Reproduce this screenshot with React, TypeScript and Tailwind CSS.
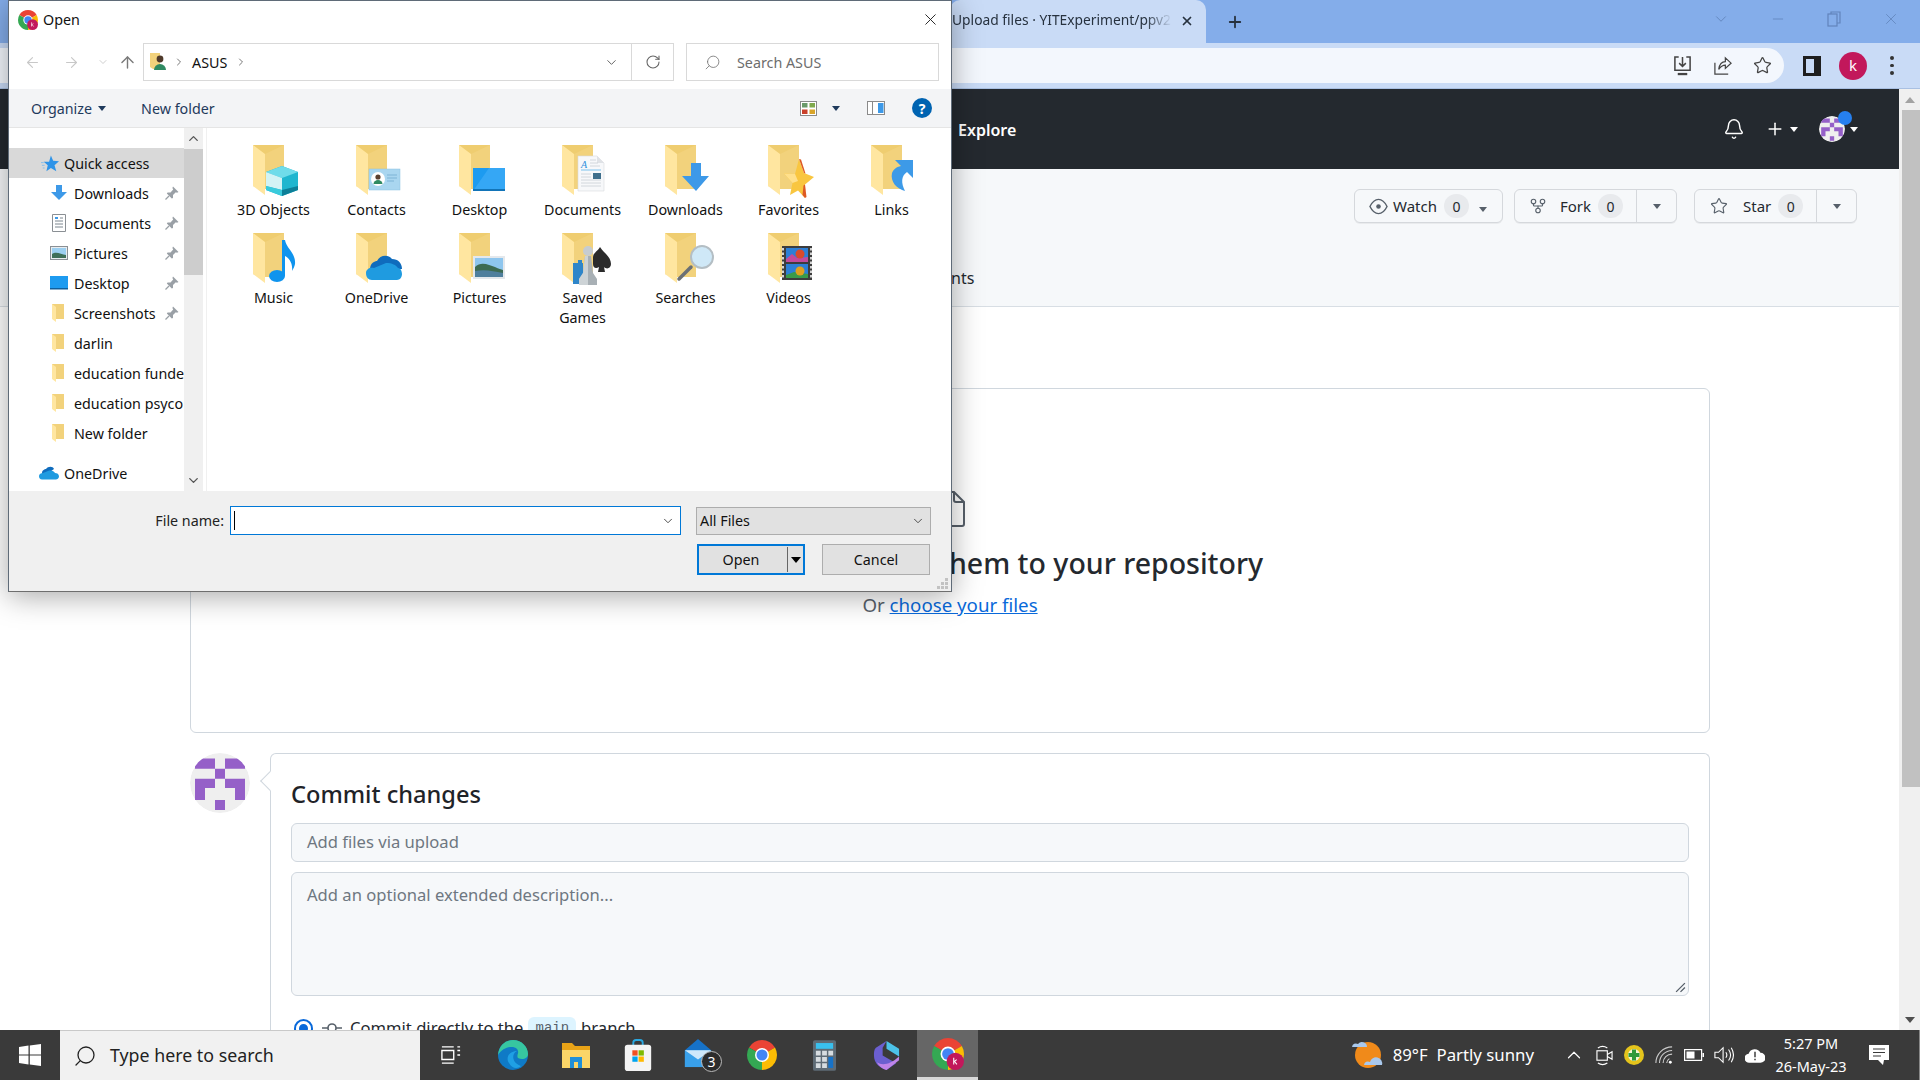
import type { ReactNode } from "react";
import {
  ArrowLeft,
  ArrowRight,
  ArrowUp,
  Bell,
  ChevronDown,
  ChevronRight,
  ChevronUp,
  GitFork,
  Minus,
  Plus,
  RotateCw,
  Search,
  Star,
  X,
} from "lucide-react";

function Caret({ className = "" }: { className?: string }) {
  return <span className={`inline-block w-0 h-0 border-x-[4px] border-x-transparent border-t-[5px] ${className}`} />;
}

function ChromeLogo({ size, badge }: { size: number; badge?: boolean }) {
  return (
    <svg viewBox="0 0 24 24" width={size} height={size} className="shrink-0 overflow-visible">
      <path d="M12 12L1.61 6A12 12 0 0 1 22.39 6Z" fill="#ea4335" />
      <path d="M12 12L22.39 6A12 12 0 0 1 12 24Z" fill="#fbbc04" />
      <path d="M12 12L12 24A12 12 0 0 1 1.61 6Z" fill="#34a853" />
      <circle cx="12" cy="12" r="5.6" fill="#fff" />
      <circle cx="12" cy="12" r="4.4" fill="#4285f4" />
      {badge && <circle cx="17.5" cy="17.5" r="6.5" fill="#c2185b" />}
      {badge && <path d="M16.3 14.8v5M16.3 18l2.2-1.8M16.9 17.6l1.8 2.2" stroke="#fff" strokeWidth="0.8" fill="none" />}
    </svg>
  );
}

function Folder({ children }: { children?: ReactNode }) {
  return (
    <svg viewBox="0 0 42 54" className="w-[42px] h-[54px] overflow-visible">
      <path d="M0 0H31V44H8L0 41Z" fill="#efcd70" />
      <path d="M12 9L31 0V44H12Z" fill="#f2d27c" />
      <path d="M0 0L12 9V50L0 41Z" fill="#ffe6a0" />
      {children}
    </svg>
  );
}

const cube = (
  <g>
    <path d="M29 21L45 27V45L29 51L13 45V27Z" fill="#1fb6cf" />
    <path d="M29 21L45 27L29 33L13 27Z" fill="#6fdcea" />
    <path d="M13 27L29 33V45L13 41Z" fill="#d2f3f5" />
    <path d="M13 41L29 45V51L13 45Z" fill="#39cbdc" />
    <path d="M29 45L45 41V45L29 51Z" fill="#0d7f98" />
  </g>
);

const contactCard = (
  <g>
    <rect x="13" y="24" width="31" height="21" fill="#a9d6f0" stroke="#8cc2e2" strokeWidth="0.5" />
    <circle cx="22" cy="34" r="7" fill="#fff" />
    <circle cx="22" cy="32" r="2.6" fill="#5a4030" />
    <path d="M17.5 39a4.5 4 0 0 1 9 0Z" fill="#2f8a62" />
    <path d="M31 30h10M31 33h10M31 36h7" stroke="#7fb4d6" strokeWidth="1.2" />
  </g>
);

const desktopScreen = (
  <g>
    <rect x="14" y="23" width="32" height="23" fill="#1d9bf0" />
    <path d="M14 46L30 23H46V44H14Z" fill="#35a7f5" />
    <rect x="14" y="44" width="32" height="2" fill="#1274b8" />
  </g>
);

const documentPage = (
  <g>
    <path d="M16 11H35L42 18V46H16Z" fill="#f7f8fa" stroke="#d8dadd" strokeWidth="0.6" />
    <path d="M35 11V18H42Z" fill="#dfe2e6" />
    <path d="M19 25H39" stroke="#5db4ea" strokeWidth="0.8" />
    <path d="M28 15h6M28 18h8M28 21h10M19 29h10M19 32h10M19 35h20M19 38h20M19 41h20" stroke="#c9ced4" strokeWidth="0.8" />
    <text x="19" y="23" fontSize="10" fontStyle="italic" fontFamily="Liberation Serif" fill="#2f8fdc">A</text>
    <rect x="31" y="28" width="8" height="6" fill="#3f6f8c" />
  </g>
);

const downloadArrow = <path d="M26 18H36V31H44L31 46L17 31H26Z" fill="#3d99e8" />;

const favoriteStar = (
  <g>
    <path d="M31 14L36 28L46 32L37 39.5L37 53L30 45.5L22 50L24.5 38L16 28.5L27 29Z" fill="#f9c640" />
    <path d="M16 28.5L27 29L30 36L24.5 38Z" fill="#ffe08c" />
    <path d="M31 14L33 14.5L37.5 28.5L36 28Z" fill="#dd5a24" />
    <path d="M35.5 40.5L37 39.5L38.5 52L37 53L34.5 50Z" fill="#dd5a24" />
  </g>
);

const linkArrow = (
  <path d="M24 15H42V33L36 27C30 31 30 38 34 46C26 44 19 37 21 28C22 25 25 22 30 21Z" fill="#3d9ae8" />
);

const musicNote = (
  <g>
    <ellipse cx="24" cy="43" rx="8" ry="6" fill="#0f94ee" />
    <path d="M29 43V7H32C33 15 43 20 42 31C41.5 34 40 36 39 38C40 30 36 25 32 23V43Z" fill="#0f94ee" />
  </g>
);

const oneDriveCloud = (
  <g>
    <path d="M14 36C14 30 19 28 21 28C24 22 32 21 36 26C42 26 46 30 46 36H30L18 44C15 43 14 40 14 36Z" fill="#0f6cbd" />
    <path d="M10 40C10 36 14 34 18 35L30 30C36 30 40 32 42 35C45 35 46 39 46 41C46 44 44 47 41 47H16C12 47 10 44 10 40Z" fill="#1f9be0" />
  </g>
);

const landscape = (
  <g>
    <rect x="14" y="23" width="32" height="23" fill="#e4e8ec" />
    <rect x="16" y="25" width="28" height="19" fill="#8ec6ee" />
    <path d="M16 34C22 28 30 32 36 34C40 36 42 36 44 37V44H16Z" fill="#3d6b52" />
    <path d="M16 38C26 36 34 38 44 40V44H16Z" fill="#4f7f9d" />
  </g>
);

const gamesIcons = (
  <g>
    <path d="M11 30H16V27H20V30H21V51H11Z" fill="#2f86c9" />
    <path d="M38 14C42 20 49 24 49 31C49 35 45 37 42 34L43 39H36L37 34C34 36 31 35 31 31V24C31 20 36 18 38 14Z" fill="#2b2b2b" />
    <circle cx="26" cy="18" r="5" fill="#c6ccd0" />
    <path d="M23 23H29L31 40L35 46V52H17V46L21 40Z" fill="#a8b0b5" />
    <path d="M23 23H26V52H17V46L21 40Z" fill="#cdd3d6" />
  </g>
);

const magnifier = (
  <g>
    <path d="M14 46L26 34" stroke="#6b7075" strokeWidth="3.5" strokeLinecap="round" />
    <circle cx="37" cy="24" r="11" fill="#cfe8f7" stroke="#b4bec4" strokeWidth="2" />
  </g>
);

const filmStrip = (
  <g>
    <rect x="14" y="13" width="30" height="34" fill="#3d3d3d" />
    <path d="M15 15v30M43 15v30" stroke="#d4d4d4" strokeWidth="2" strokeDasharray="2.5 2" />
    <rect x="18" y="15" width="22" height="14" fill="#2d7fd6" />
    <rect x="18" y="31" width="22" height="14" fill="#2d7fd6" />
    <path d="M18 26l6-5 5 4 11-1v5H18Z" fill="#c24a9c" />
    <path d="M18 42l8-3 14 2v4H18Z" fill="#3a9a4a" />
    <circle cx="32" cy="21" r="4.5" fill="#d94a2a" />
    <circle cx="32" cy="38" r="4.5" fill="#e0a020" />
  </g>
);

const FILES: { label: string; art: ReactNode }[] = [
  { label: "3D Objects", art: cube },
  { label: "Contacts", art: contactCard },
  { label: "Desktop", art: desktopScreen },
  { label: "Documents", art: documentPage },
  { label: "Downloads", art: downloadArrow },
  { label: "Favorites", art: favoriteStar },
  { label: "Links", art: linkArrow },
  { label: "Music", art: musicNote },
  { label: "OneDrive", art: oneDriveCloud },
  { label: "Pictures", art: landscape },
  { label: "Saved Games", art: gamesIcons },
  { label: "Searches", art: magnifier },
  { label: "Videos", art: filmStrip },
];

function SmallIcon({ kind }: { kind: string }) {
  if (kind === "download")
    return (
      <svg viewBox="0 0 18 18" className="w-[18px] h-[18px]">
        <path d="M6 1H12V8H17L9 16L1 8H6Z" fill="#3d99e8" />
      </svg>
    );
  if (kind === "document")
    return (
      <svg viewBox="0 0 18 18" className="w-[18px] h-[18px]">
        <path d="M2.5 0.5H15.5V17.5H2.5Z" fill="#fff" stroke="#8a8f94" />
        <path d="M5 4h3M10 4h3M5 7h8M5 10h8M5 13h8" stroke="#7d8790" />
        <path d="M5 3h3v2H5Z" fill="#3d99e8" />
      </svg>
    );
  if (kind === "picture")
    return (
      <svg viewBox="0 0 18 14" className="w-[18px] h-[14px]">
        <rect x="0.5" y="0.5" width="17" height="13" fill="#e8ecef" stroke="#8a8f94" />
        <rect x="2" y="2" width="14" height="10" fill="#9ccff0" />
        <path d="M2 8C6 5 11 8 16 9V12H2Z" fill="#3e6f58" />
      </svg>
    );
  if (kind === "desktop")
    return (
      <svg viewBox="0 0 18 14" className="w-[18px] h-[14px]">
        <rect width="18" height="13" fill="#1d9bf0" />
        <rect y="12" width="18" height="1.5" fill="#0f5f9c" />
      </svg>
    );
  return (
    <svg viewBox="0 0 13 18" className="w-[13px] h-[18px] ml-[2px]">
      <path d="M0 0H12V15H3L0 14Z" fill="#f2d27c" />
      <path d="M0 0L4 3V18L0 15Z" fill="#ffe6a0" />
    </svg>
  );
}

function PinIcon() {
  return (
    <svg viewBox="0 0 14 14" className="w-[14px] h-[14px] ml-auto mr-[5px] shrink-0">
      <path d="M8 0.5L13.5 6L12 6.8L10.8 6.2L8 9L8 12L6.8 12.6L1.8 7.6L2.6 6.5L5.5 6.5L8.2 3.5L7.4 2Z" fill="#9aa0a6" />
      <path d="M4 10L0.5 13.5" stroke="#9aa0a6" strokeWidth="1.2" />
    </svg>
  );
}

const NAV_ITEMS = [
  { label: "Downloads", icon: "download", pin: true },
  { label: "Documents", icon: "document", pin: true },
  { label: "Pictures", icon: "picture", pin: true },
  { label: "Desktop", icon: "desktop", pin: true },
  { label: "Screenshots", icon: "folder", pin: true },
  { label: "darlin", icon: "folder" },
  { label: "education funde", icon: "folder" },
  { label: "education psyco", icon: "folder" },
  { label: "New folder", icon: "folder" },
];

function CloudSmall() {
  return (
    <svg viewBox="0 0 20 14" className="w-[20px] h-[14px]">
      <path d="M3 7C3 4 6 3 7 3C9 0 14 0 15 3L8 8L3 10Z" fill="#0f6cbd" />
      <path d="M0 10C0 8 2 7 4 7L9 5C12 4 15 5 16 7C18 7 20 8 20 10.5C20 12.5 18 13.5 17 13.5H3C1 13.5 0 12 0 10Z" fill="#1f9be0" />
    </svg>
  );
}

function FileDialog() {
  return (
    <div className="absolute left-[8px] top-0 w-[944px] h-[592px] flex flex-col bg-white border border-[#5f6b78] border-b-[#6e6e6e] shadow-[0_4px_28px_rgba(0,0,0,0.35)] text-[14.3px] text-[#111]">
      <div className="h-[39px] flex items-center justify-between pl-[9px] pr-[12px] pb-[2px] shrink-0">
        <div className="flex items-center gap-[5px]">
          <ChromeLogo size={20} badge />
          <span>Open</span>
        </div>
        <X className="w-[19px] h-[19px] -mr-px text-[#222]" strokeWidth={1.2} />
      </div>

      <div className="h-[49px] pt-[3px] flex items-start shrink-0">
        <div className="w-[134px] h-[38px] flex items-center relative text-[#c8c8c8]">
          <ArrowLeft className="w-[17px] h-[17px] ml-[15px]" strokeWidth={1.6} />
          <ArrowRight className="w-[17px] h-[17px] ml-[22px]" strokeWidth={1.6} />
          <ChevronDown className="w-[12px] h-[12px] ml-[17px]" strokeWidth={1.8} />
          <ArrowUp className="w-[19px] h-[19px] ml-[9px] text-[#7a7a7a]" strokeWidth={1.8} />
        </div>
        <div className="w-[531px] h-[38px] border border-[#d9d9d9] flex items-center">
          <svg viewBox="0 0 16 18" className="w-[16px] h-[18px] ml-[6px] shrink-0">
            <path d="M0 0H10V16H3L0 14Z" fill="#f2d27c" />
            <circle cx="10" cy="6" r="3.4" fill="#4f3a2b" />
            <path d="M4 17a6 6 0 0 1 12 0Z" fill="#2f8a62" />
          </svg>
          <ChevronRight className="w-[12px] h-[12px] ml-[7px] text-[#777]" strokeWidth={2} />
          <span className="ml-[7px] mt-[2px]">ASUS</span>
          <ChevronRight className="w-[12px] h-[12px] ml-[8px] text-[#777]" strokeWidth={2} />
          <ChevronDown className="w-[15px] h-[15px] ml-auto mr-[12px] text-[#666]" strokeWidth={1.6} />
          <div className="w-[42px] h-full border-l border-[#d9d9d9] flex items-center justify-center">
            <RotateCw className="w-[16px] h-[16px] text-[#666]" strokeWidth={1.6} />
          </div>
        </div>
        <div className="w-[253px] h-[38px] ml-[12px] border border-[#d9d9d9] flex items-center text-[#6d6d6d]">
          <Search className="w-[17px] h-[17px] ml-[17px] -scale-x-100 text-[#777]" strokeWidth={1.2} />
          <span className="ml-[16px] mt-[2px]">Search ASUS</span>
        </div>
      </div>

      <div className="h-[39px] flex items-center bg-[#f3f4f6] border-b border-[#e5e5e5] pl-[22px] pr-[19px] shrink-0 text-[#1f3a5c]">
        <span className="mt-px">Organize</span>
        <Caret className="ml-[6px] border-t-[#1f3a5c]" />
        <span className="ml-[35px] mt-px">New folder</span>
        <svg viewBox="0 0 17 15" className="w-[17px] h-[15px] ml-auto">
          <rect x="0.5" y="0.5" width="16" height="14" fill="#fff" stroke="#8a8a8a" />
          <rect x="2" y="2" width="5.5" height="4.5" fill="#6a9a6a" />
          <rect x="9.5" y="2" width="5.5" height="4.5" fill="#7fa94c" />
          <rect x="2" y="8.5" width="5.5" height="4.5" fill="#c9402a" />
          <rect x="9.5" y="8.5" width="5.5" height="4.5" fill="#d9a52a" />
        </svg>
        <Caret className="ml-[15px] border-t-[#1f3a5c]" />
        <svg viewBox="0 0 18 14" className="w-[18px] h-[14px] ml-[27px]">
          <rect x="0.5" y="0.5" width="17" height="13" fill="#fff" stroke="#8a8a8a" />
          <rect x="11" y="2" width="5.5" height="10" fill="#3d99e8" />
          <path d="M5.5 1v12" stroke="#8a8a8a" />
        </svg>
        <div className="w-[20px] h-[20px] ml-[27px] rounded-full bg-[#0063b1] text-white text-[14px] font-bold flex items-center justify-center">?</div>
      </div>

      <div className="h-[363px] flex shrink-0">
        <div className="w-[175px] pt-[20px] overflow-hidden shrink-0">
          <div className="h-[30px] bg-[#d9d9d9] flex items-center">
            <svg viewBox="0 0 20 18" className="w-[18px] h-[17px] ml-[32px] mr-[5px] shrink-0">
              <path d="M11 0L13.5 6L20 6.5L15 11L17 17.5L11 14L6 17.5L7.5 11L3 7H9Z" fill="#2f94e8" />
              <path d="M0 8h3M1 11h3M2 14h2" stroke="#7fbcee" />
            </svg>
            <span className="mt-px">Quick access</span>
          </div>
          {NAV_ITEMS.map((item) => (
            <div key={item.label} className="h-[30px] flex items-center whitespace-nowrap">
              <div className="w-[18px] ml-[41px] mr-[6px] shrink-0 flex items-center">
                <SmallIcon kind={item.icon} />
              </div>
              <span className="mt-[2px]">{item.label}</span>
              {item.pin && <PinIcon />}
            </div>
          ))}
          <div className="h-[30px] mt-[10px] flex items-center">
            <div className="ml-[30px] mr-[5px]">
              <CloudSmall />
            </div>
            <span className="mt-[2px]">OneDrive</span>
          </div>
        </div>
        <div className="w-[19px] shrink-0 bg-[#f0f0f0] flex flex-col items-center">
          <div className="h-[21px] flex items-center">
            <ChevronUp className="w-[15px] h-[15px] text-[#555]" strokeWidth={2.2} />
          </div>
          <div className="w-full h-[126px] bg-[#cdcdcd]" />
          <div className="mt-auto h-[21px] flex items-center">
            <ChevronDown className="w-[15px] h-[15px] text-[#555]" strokeWidth={2.2} />
          </div>
        </div>
        <div className="flex-1 ml-[3px] border-l border-[#f0f0f0] pl-[15px] pt-[17px]">
          <div className="grid grid-cols-[repeat(7,103px)] auto-rows-[88px]">
            {FILES.map((file) => (
              <div key={file.label} className="flex flex-col items-center">
                <Folder>{file.art}</Folder>
                <div className="w-[80px] mt-px text-center leading-[20px]">{file.label}</div>
              </div>
            ))}
          </div>
        </div>
      </div>

      <div className="flex-1 bg-[#f0f0f0] pt-[15px] pr-[20px] relative flex flex-col items-end">
        <div className="flex items-center">
          <span className="mr-[6px] text-[#222]">File name:</span>
          <div className="w-[451px] h-[29px] bg-white border border-[#0078d7] flex items-center justify-between pl-[3px] pr-[5px]">
            <div className="w-px h-[19px] bg-black" />
            <ChevronDown className="w-[14px] h-[14px] text-[#444]" strokeWidth={1.6} />
          </div>
          <div className="w-[235px] h-[28px] ml-[15px] bg-[#e1e1e1] border border-[#adadad] flex items-center justify-between pl-[3px] pr-[5px]">
            <span>All Files</span>
            <ChevronDown className="w-[14px] h-[14px] text-[#444]" strokeWidth={1.6} />
          </div>
        </div>
        <div className="flex mt-[9px] mr-px">
          <div className="w-[108px] h-[31px] bg-[#e1e1e1] border-2 border-[#0078d7] flex items-center">
            <span className="w-[84px] mr-[4px] text-center">Open</span>
            <div className="w-px h-[25px] bg-[#666]" />
            <Caret className="ml-[3px] border-x-[5px] border-t-[6px] border-t-black" />
          </div>
          <div className="w-[108px] h-[31px] ml-[17px] bg-[#e1e1e1] border border-[#adadad] flex items-center justify-center">
            Cancel
          </div>
        </div>
        <svg viewBox="0 0 12 12" className="absolute right-[3px] bottom-[1px] w-[12px] h-[12px]">
          <path d="M9 0h3v3H9ZM5 4h3v3H5ZM9 4h3v3H9ZM1 8h3v3H1ZM5 8h3v3H5ZM9 8h3v3H9Z" fill="#c2c2c2" />
        </svg>
      </div>
    </div>
  );
}

function RepoButton({
  icon,
  label,
  count,
  split,
  labelClass,
}: {
  icon: ReactNode;
  label: string;
  count: number;
  split?: boolean;
  labelClass: string;
}) {
  return (
    <div className={`h-[34px] flex items-center bg-[#f6f8fa] border border-[#d5d8dc] rounded-[6px] shadow-[0_1px_0_rgba(27,31,36,0.06)] ${split ? "w-[163px]" : "w-[149px]"}`}>
      <div className={`flex items-center h-full pl-[14px] ${split ? "w-[122px] border-r border-[#d5d8dc]" : ""}`}>
        {icon}
        <span className={`text-[15px] text-[#24292f] ${labelClass}`}>{label}</span>
        <span className="ml-[7px] w-[25px] h-[24px] rounded-full bg-[#e8eaed] flex items-center justify-center text-[14px] text-[#24292f]">{count}</span>
      </div>
      <div className={split ? "flex-1 flex justify-center" : "ml-[10px]"}>
        <Caret className="border-t-[#57606a]" />
      </div>
    </div>
  );
}

function Identicon({ size }: { size: number }) {
  return (
    <svg viewBox="0 0 60 60" width={size} height={size} className="shrink-0 rounded-full">
      <circle cx="30" cy="30" r="30" fill="#efefef" />
      <path d="M5 5H25V16H5ZM35 5H55V16H35ZM25 16H35V27H25ZM5 27H25V37H15V50H5ZM35 27H55V50H45V37H35ZM25 50H35V61H25Z" fill="#9560c8" transform="translate(0 1) scale(1 0.92)" />
    </svg>
  );
}

function GithubPage() {
  return (
    <div className="flex-1 flex flex-col overflow-hidden [font-family:'Noto_Sans',sans-serif]">
      <div className="h-[80px] shrink-0 bg-[#24292f] flex items-center text-white pl-[958px] pr-[41px]">
        <span className="text-[16px] font-semibold mt-[2px]">Explore</span>
        <Bell className="w-[22px] h-[22px] ml-auto" strokeWidth={1.6} />
        <Plus className="w-[20px] h-[20px] ml-[20px]" strokeWidth={1.8} />
        <Caret className="ml-[5px] border-t-white" />
        <div className="ml-[21px] relative flex items-center">
          <Identicon size={26} />
          <span className="absolute -top-[5px] right-[-7px] w-[14px] h-[14px] rounded-full bg-[#2680f0]" />
        </div>
        <Caret className="ml-[5px] border-t-white" />
      </div>

      <div className="h-[138px] shrink-0 bg-[#f6f8fa] border-b border-[#d8dee4] pt-[20px] pr-[42px] flex flex-col">
        <div className="flex justify-end">
          <RepoButton
            label="Watch"
            count={0}
            labelClass="ml-[5px]"
            icon={
              <svg viewBox="0 0 20 20" className="w-[19px] h-[19px] shrink-0">
                <path d="M1 10C4 4 7 2.5 10 2.5S16 4 19 10C16 16 13 17.5 10 17.5S4 16 1 10Z" fill="none" stroke="#57606a" strokeWidth="1.5" />
                <circle cx="10" cy="10" r="2.4" fill="#57606a" />
              </svg>
            }
          />
          <div className="ml-[11px]">
            <RepoButton label="Fork" count={0} split labelClass="ml-[13px]" icon={<GitFork className="w-[18px] h-[18px] text-[#57606a]" strokeWidth={1.5} />} />
          </div>
          <div className="ml-[17px]">
            <RepoButton label="Star" count={0} split labelClass="ml-[15px]" icon={<Star className="w-[18px] h-[18px] ml-px text-[#57606a]" strokeWidth={1.5} />} />
          </div>
        </div>
        <span className="mt-[43px] ml-[951px] text-[16px] leading-[24px] text-[#24292f] whitespace-nowrap">nts</span>
      </div>

      <div className="flex-1 bg-white pl-[190px] pt-[81px]">
        <div className="w-[1520px] h-[345px] border border-[#d0d7de] rounded-[6px] flex flex-col items-center pt-[102px]">
          <svg viewBox="0 0 32 36" className="w-[32px] h-[36px]">
            <path d="M3 1H20L30 11V33A2 2 0 0 1 28 35H4A2 2 0 0 1 2 33V3A2 2 0 0 1 4 1Z" fill="none" stroke="#57606a" strokeWidth="2" />
            <path d="M20 1V9A2 2 0 0 0 22 11H30" fill="none" stroke="#57606a" strokeWidth="2" />
          </svg>
          <h2 className="mt-[16px] text-[28.5px] leading-[40px] font-medium text-[#24292f] whitespace-nowrap">Drag files here to add them to your repository</h2>
          <p className="mt-[7px] text-[18.7px] leading-[30px] text-[#57606a]">
            Or <span className="text-[#0969da] underline">choose your files</span>
          </p>
        </div>
        <div className="flex mt-[20px]">
          <Identicon size={60} />
          <div className="ml-[20px] w-[1440px] relative border border-[#d0d7de] border-b-0 rounded-t-[6px] h-[400px] px-[20px] pt-[23px]">
            <div className="absolute -left-[8px] top-[20px] w-[14px] h-[14px] rotate-45 bg-white border-l border-b border-[#d0d7de]" />
            <h3 className="text-[23.6px] leading-[34px] font-medium text-[#1f2328]">Commit changes</h3>
            <div className="mt-[12px] h-[39px] bg-[#f6f8fa] border border-[#d0d7de] rounded-[6px] flex items-center pl-[15px] text-[16.6px] text-[#6e7781]">Add files via upload</div>
            <div className="mt-[10px] h-[124px] bg-[#f6f8fa] border border-[#d0d7de] rounded-[6px] pl-[15px] pt-[10px] text-[16.6px] text-[#6e7781] relative">
              Add an optional extended description...
              <svg viewBox="0 0 10 10" className="absolute right-[2px] bottom-[2px] w-[11px] h-[11px]">
                <path d="M1 9L9 1M5 9L9 5" stroke="#57606a" strokeWidth="1.2" />
              </svg>
            </div>
            <div className="mt-[21px] flex items-center pl-[5px] text-[16.6px] text-[#24292f] h-[22px] leading-[22px]">
              <span className="w-[15px] h-[15px] rounded-full border-[3px] border-white bg-[#0969da] outline-2 outline-[#0969da]" />
              <svg viewBox="0 0 20 12" className="w-[20px] h-[12px] ml-[11px]">
                <circle cx="10" cy="6" r="4" fill="none" stroke="#57606a" strokeWidth="1.6" />
                <path d="M0 6H6M14 6H20" stroke="#57606a" strokeWidth="1.6" />
              </svg>
              <span className="ml-[8px]">Commit directly to the</span>
              <code className="mx-[5px] px-[7px] rounded-[6px] bg-[#ddf4ff] text-[14px] text-[#57606a] [font-family:'Liberation_Mono',monospace]">main</code>
              <span>branch</span>
            </div>
          </div>
        </div>
      </div>
    </div>
  );
}

function PageScrollbar() {
  return (
    <div className="w-[21px] shrink-0 bg-[#f0f0f0] flex flex-col items-center">
      <div className="h-[21px] flex items-center">
        <span className="w-0 h-0 border-x-[5px] border-x-transparent border-b-[6px] border-b-[#a3a3a3]" />
      </div>
      <div className="w-[18px] h-[677px] ml-[3px] bg-[#c1c1c1]" />
      <div className="mt-auto h-[21px] flex items-center">
        <Caret className="border-x-[5px] border-t-[6px] border-t-[#505050]" />
      </div>
    </div>
  );
}

function Taskbar() {
  return (
    <div className="h-[50px] shrink-0 bg-[#3a3a3a] flex items-stretch text-white [font-family:'Noto_Sans',sans-serif]">
      <div className="w-[60px] flex items-center justify-center">
        <svg viewBox="0 0 22 22" className="w-[22px] h-[22px]">
          <path d="M0 3L9.5 1.6V10.4H0ZM10.8 1.4L22 0V10.4H10.8ZM0 11.6H9.5V20.4L0 19ZM10.8 11.6H22V22L10.8 20.6Z" fill="#fff" />
        </svg>
      </div>
      <div className="w-[360px] bg-[#f1f1f1] border-t border-[#c9c9c9] flex items-center text-[#222]">
        <Search className="w-[24px] h-[24px] ml-[13px] -scale-x-100" strokeWidth={1.3} />
        <span className="ml-[13px] text-[17.8px]">Type here to search</span>
      </div>
      <div className="w-[61px] flex items-center justify-center">
        <svg viewBox="0 0 22 22" className="w-[20px] h-[20px]" fill="none" stroke="#fff" strokeWidth="1.5">
          <path d="M1 2H14M1 20H14M1 6H14V16H1Z" />
          <path d="M18 2h3M18 6h3M18 11h3" />
        </svg>
      </div>
      <div className="w-[64px] flex items-center justify-center">
        <svg viewBox="0 0 32 32" className="w-[32px] h-[32px]">
          <circle cx="16" cy="16" r="15" fill="#0f7ac6" />
          <path d="M1 16C2 6 9 1 16 1C25 1 31 8 31 15C31 20 25 21 21 19C19 16 23 14 20 10C16 6 6 8 1 16Z" fill="#37c6a0" />
          <path d="M12 24C8 18 13 12 20 12C14 15 15 24 24 27C21 30 15 30 12 24Z" fill="#1fa0e4" />
        </svg>
      </div>
      <div className="w-[62px] flex items-center justify-center">
        <svg viewBox="0 0 28 28" className="w-[28px] h-[28px]">
          <path d="M0 2H10L13 5H28V27H0Z" fill="#e8a317" />
          <path d="M0 9H28V27H0Z" fill="#fbd568" />
          <path d="M8 27V16H20V27H16V21H12V27Z" fill="#1f8fd8" />
        </svg>
      </div>
      <div className="w-[62px] flex items-center justify-center">
        <svg viewBox="0 0 28 34" className="w-[28px] h-[32px]">
          <path d="M9 10V4A3 3 0 0 1 12 1H16A3 3 0 0 1 19 4V10" fill="none" stroke="#2aa8e0" strokeWidth="2" />
          <rect y="6" width="28" height="28" rx="3" fill="#f4f4f4" />
          <rect x="8" y="12" width="5.6" height="5.6" fill="#f25022" />
          <rect x="14.6" y="12" width="5.6" height="5.6" fill="#7fba00" />
          <rect x="8" y="18.6" width="5.6" height="5.6" fill="#00a4ef" />
          <rect x="14.6" y="18.6" width="5.6" height="5.6" fill="#ffb900" />
        </svg>
      </div>
      <div className="w-[62px] flex items-center justify-center">
        <div className="relative w-[40px] h-[34px] ml-[4px]">
          <svg viewBox="0 0 32 32" className="w-[32px] h-[30px]">
            <path d="M2 13L16 1L30 13V31H2Z" fill="#1672c8" />
            <path d="M2 13H30V31H2Z" fill="#39a0ea" />
            <path d="M2 13L16 23L30 13Z" fill="#cfe8fb" />
          </svg>
          <span className="absolute right-0 bottom-0 w-[21px] h-[21px] rounded-full bg-[#2c2c2c] border border-[#bbb] flex items-center justify-center text-[14px]">3</span>
        </div>
      </div>
      <div className="w-[62px] flex items-center justify-center">
        <ChromeLogo size={30} />
      </div>
      <div className="w-[62px] flex items-center justify-center">
        <svg viewBox="0 0 24 32" className="w-[23px] h-[31px]">
          <rect width="24" height="32" rx="2" fill="#5e6b75" />
          <rect x="3" y="3" width="18" height="6" fill="#39c0ee" />
          <path d="M3 11h5v5H3ZM9.5 11h5v5h-5ZM16 11h5v5h-5ZM3 17.5h5v5H3ZM9.5 17.5h5v5h-5ZM3 24h5v5H3ZM9.5 24h5v5h-5Z" fill="#d6dce0" />
          <rect x="16" y="17.5" width="5" height="11.5" fill="#1672c8" />
        </svg>
      </div>
      <div className="w-[62px] flex items-center justify-center">
        <svg viewBox="0 0 28 32" className="w-[27px] h-[31px]">
          <path d="M14 1L27 9V17L14 9Z" fill="#4cc2e8" />
          <path d="M14 1L3 8C1 10 1 13 1 16C1 24 7 29 14 31L24 24L10 16V8Z" fill="#6b5fd0" />
          <path d="M27 17V21L14 31C10 30 6 27 4 23C10 27 18 25 27 17Z" fill="#c084e8" />
        </svg>
      </div>
      <div className="w-[61px] bg-[#666] border-b-[3px] border-[#d8d8d8] flex items-center justify-center">
        <ChromeLogo size={32} badge />
      </div>

      <div className="ml-auto flex items-center">
        <svg viewBox="0 0 32 32" className="w-[32px] h-[32px] mr-[9px] shrink-0">
          <circle cx="16" cy="16" r="13" fill="#f08a1a" />
          <path d="M0 8a4 4 0 0 1 6-3a5 5 0 0 1 9 3Z" fill="#a9c8ec" />
          <path d="M12 26a4 4 0 0 1 6-3a5 5 0 0 1 12 3Z" fill="#a9c8ec" />
        </svg>
        <span className="text-[16.8px] whitespace-nowrap">89°F&nbsp; Partly sunny</span>
        <div className="w-[25px]" />
        <div className="w-[30px] flex justify-center">
          <ChevronUp className="w-[22px] h-[22px]" strokeWidth={1.3} />
        </div>
        <div className="w-[30px] flex justify-center">
          <svg viewBox="0 0 18 22" className="w-[17px] h-[21px]" fill="none" stroke="#fff" strokeWidth="1.2">
            <rect x="1" y="6" width="11" height="10" />
            <path d="M12 10l5-3v8l-5-3M2 3C5 1 9 1 12 3M2 19C5 21 9 21 12 19" />
          </svg>
        </div>
        <div className="w-[30px] flex justify-center">
          <svg viewBox="0 0 20 20" className="w-[20px] h-[20px]">
            <circle cx="10" cy="10" r="10" fill="#e4c41c" />
            <circle cx="10" cy="10" r="6" fill="#f4f4d8" />
            <path d="M8 4.5h4V8h3.5v4H12v3.5H8V12H4.5V8H8Z" fill="#2e9a3c" />
          </svg>
        </div>
        <div className="w-[30px] flex justify-center">
          <svg viewBox="0 0 20 20" className="w-[18px] h-[18px]" fill="none" stroke="#ccc" strokeWidth="1.2">
            <path d="M1 19A18 18 0 0 1 19 1M5 19A14 14 0 0 1 19 5M9 19A10 10 0 0 1 19 9M13 19A6 6 0 0 1 16 14" />
            <circle cx="17" cy="18" r="1.6" fill="#fff" stroke="none" />
          </svg>
        </div>
        <div className="w-[29px] flex justify-center">
          <svg viewBox="0 0 20 12" className="w-[20px] h-[12px]">
            <rect x="0.6" y="0.6" width="17" height="10.8" fill="none" stroke="#fff" strokeWidth="1.2" />
            <rect x="2.5" y="2.5" width="8" height="7" fill="#fff" />
            <rect x="18.5" y="4" width="1.5" height="4" fill="#fff" />
          </svg>
        </div>
        <div className="w-[31px] flex justify-center">
          <svg viewBox="0 0 22 20" className="w-[20px] h-[20px]" fill="none" stroke="#fff" strokeWidth="1.2">
            <path d="M1 7H5L10 2V18L5 13H1Z" />
            <path d="M13 7C14.5 9 14.5 11 13 13M16 4C19 8 19 12 16 16M19 2C22 7 22 13 19 18" />
          </svg>
        </div>
        <div className="w-[31px] flex justify-center">
          <svg viewBox="0 0 22 16" className="w-[20px] h-[15px]">
            <path d="M5 16A5 5 0 0 1 4 6A7 7 0 0 1 17 5A5.5 5.5 0 0 1 17 16Z" fill="#fff" />
            <path d="M10.2 4h1.6v6h-1.6ZM10.2 11.5h1.6v1.6h-1.6Z" fill="#3a3a3a" />
          </svg>
        </div>
        <div className="w-[90px] -ml-[4px] flex flex-col items-center text-[14.5px] leading-[23px]">
          <span>5:27 PM</span>
          <span>26-May-23</span>
        </div>
        <div className="w-[46px] flex justify-center">
          <svg viewBox="0 0 20 20" className="w-[20px] h-[20px]">
            <path d="M0 0H20V15H15L14 20L9 15H0Z" fill="#fff" />
            <path d="M4 4h12M4 7.5h12M4 11h8" stroke="#3a3a3a" strokeWidth="1.2" />
          </svg>
        </div>
        <div className="w-[18px] h-full border-r border-[#888]" />
      </div>
    </div>
  );
}

export default function App() {
  return (
    <div className="relative w-[1920px] h-[1080px] overflow-hidden flex flex-col bg-white [font-family:'Noto_Sans',sans-serif]">
      <div className="h-[43px] shrink-0 bg-[#84adea] flex items-end pl-[950px] pr-[20px] text-[#27323f]">
        <div className="w-[256px] h-[43px] bg-[#c9dbf6] rounded-t-[10px] flex items-center pl-[2px] pr-[12px] pb-[2px] text-[13.8px] overflow-hidden">
          <span className="flex-1 whitespace-nowrap overflow-hidden [mask-image:linear-gradient(to_right,black_88%,transparent)]">Upload files · YITExperiment/ppv2</span>
          <X className="w-[14px] h-[14px] ml-[8px] shrink-0" strokeWidth={3} />
        </div>
        <div className="h-full flex items-center ml-[20px]">
          <Plus className="w-[18px] h-[18px]" strokeWidth={2.4} />
        </div>
        <div className="h-full ml-auto pb-[5px] flex items-center text-[#6184bb]">
          <ChevronDown className="w-[18px] h-[18px] -ml-px" strokeWidth={1.2} />
          <Minus className="w-[16px] h-[16px] ml-[40px]" strokeWidth={1.2} />
          <svg viewBox="0 0 14 16" className="w-[14px] h-[16px] ml-[41px]" fill="none" stroke="#6184bb" strokeWidth="1.2">
            <rect x="1" y="3" width="9" height="12" />
            <path d="M4 3V1H13V12H10" />
          </svg>
          <X className="w-[18px] h-[18px] ml-[41px]" strokeWidth={1.1} />
        </div>
      </div>

      <div className="h-[46px] shrink-0 bg-[#c9dbf6] border-b border-[#a9c0e2] pt-[5px] flex items-start">
        <div className="w-[1784px] h-[35px] shrink-0 bg-[#f3f7fd] rounded-r-[18px] flex items-center justify-end pr-[12px] text-[#444]">
          <svg viewBox="0 0 20 22" className="w-[19px] h-[21px]" fill="none" stroke="#444" strokeWidth="1.6">
            <path d="M6 2H2V16H18V2H14M10 2V12M6.5 8.5L10 12L13.5 8.5" />
            <path d="M5 20H15" strokeWidth="2.4" />
          </svg>
          <svg viewBox="0 0 20 22" className="w-[19px] h-[21px] ml-[21px]" fill="none" stroke="#444" strokeWidth="1.3">
            <path d="M2 8V20H16M6 15C7 9 10 7 13 7V3L19 8.5L13 14V10.5C10 10.5 8 12 6 15Z" />
          </svg>
          <Star className="w-[19px] h-[19px] ml-[21px]" strokeWidth={1.6} />
        </div>
        <div className="h-[35px] flex items-center">
          <div className="w-[18px] h-[20px] ml-[19px] border-[3px] border-[#1f1f1f] border-r-[7px] bg-[#c9dbf6]" />
          <span className="w-[28px] h-[28px] ml-[18px] rounded-full bg-[#c2185b] text-white text-[15px] flex items-center justify-center">k</span>
          <div className="ml-[23px] flex flex-col gap-[4px]">
            <span className="w-[3.5px] h-[3.5px] rounded-full bg-[#333]" />
            <span className="w-[3.5px] h-[3.5px] rounded-full bg-[#333]" />
            <span className="w-[3.5px] h-[3.5px] rounded-full bg-[#333]" />
          </div>
        </div>
      </div>

      <div className="flex-1 flex min-h-0">
        <GithubPage />
        <PageScrollbar />
      </div>
      <Taskbar />
      <FileDialog />
    </div>
  );
}
